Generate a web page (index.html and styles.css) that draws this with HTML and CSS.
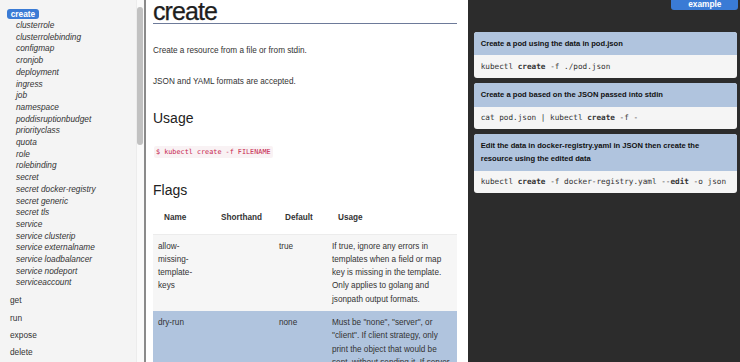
FILE: index.html
```html
<!DOCTYPE html>
<html>
<head>
<meta charset="utf-8">
<title>kubectl create</title>
<link rel="stylesheet" href="styles.css">
</head>
<body>
<div class="page">
  <nav class="sidebar">
    <ul class="nav">
      <li class="group">
        <div class="badge-row"><span class="badge">create</span></div>
        <ul class="sub">
          <li>clusterrole</li>
          <li>clusterrolebinding</li>
          <li>configmap</li>
          <li>cronjob</li>
          <li>deployment</li>
          <li>ingress</li>
          <li>job</li>
          <li>namespace</li>
          <li>poddisruptionbudget</li>
          <li>priorityclass</li>
          <li>quota</li>
          <li>role</li>
          <li>rolebinding</li>
          <li>secret</li>
          <li>secret docker-registry</li>
          <li>secret generic</li>
          <li>secret tls</li>
          <li>service</li>
          <li>service clusterip</li>
          <li>service externalname</li>
          <li>service loadbalancer</li>
          <li>service nodeport</li>
          <li>serviceaccount</li>
        </ul>
      </li>
      <li class="top">get</li>
      <li class="top">run</li>
      <li class="top">expose</li>
      <li class="top">delete</li>
    </ul>
    <div class="scrollbar"><div class="thumb"></div></div>
  </nav>

  <main class="content">
    <h1>create</h1>
    <p class="lead">Create a resource from a file or from stdin.</p>
    <p class="lead second">JSON and YAML formats are accepted.</p>
    <h2 class="usage-title">Usage</h2>
    <div class="usage"><code>$ kubectl create -f FILENAME</code></div>
    <h2 class="flags-title">Flags</h2>
    <table class="flags">
      <colgroup>
        <col class="c-name">
        <col class="c-short">
        <col class="c-def">
        <col class="c-usage">
      </colgroup>
      <thead>
        <tr><th>Name</th><th>Shorthand</th><th>Default</th><th>Usage</th></tr>
      </thead>
      <tbody>
        <tr class="odd">
          <td>allow-missing-template-keys</td>
          <td></td>
          <td>true</td>
          <td>If true, ignore any errors in templates when a field or map key is missing in the template. Only applies to golang and jsonpath output formats.</td>
        </tr>
        <tr class="hl">
          <td>dry-run</td>
          <td></td>
          <td>none</td>
          <td>Must be "none", "server", or "client". If client strategy, only print the object that would be sent, without sending it. If server strategy, submit server-side request without persisting the resource.</td>
        </tr>
      </tbody>
    </table>
  </main>

  <aside class="examples">
    <div class="tabbar"><span class="tab">example</span></div>
    <div class="cards">
      <div class="card">
        <div class="card-head">Create a pod using the data in pod.json</div>
        <pre class="card-code">kubectl <b>create</b> -f ./pod.json</pre>
      </div>
      <div class="card">
        <div class="card-head">Create a pod based on the JSON passed into stdin</div>
        <pre class="card-code">cat pod.json | kubectl <b>create</b> -f -</pre>
      </div>
      <div class="card">
        <div class="card-head">Edit the data in docker-registry.yaml in JSON then create the resource using the edited data</div>
        <pre class="card-code">kubectl <b>create</b> -f docker-registry.yaml --<b>edit</b> -o json</pre>
      </div>
    </div>
  </aside>
</div>
</body>
</html>
```

FILE: styles.css
```css
html, body {
  margin: 0;
  padding: 0;
  height: 100%;
  overflow: hidden;
}

body {
  font-family: "Liberation Sans", Arial, sans-serif;
  color: #333;
  background: #fff;
}

.page {
  display: flex;
  height: 362px;
  overflow: hidden;
}

/* ---------- sidebar ---------- */
.sidebar {
  position: relative;
  width: 144px;
  flex: none;
  background: #f4f4f4;
  border-right: 2px solid #8a8a8a;
  overflow: hidden;
}

.nav {
  list-style: none;
  margin: 0;
  padding: 8px 0 0;
  font-size: 8.3px;
  color: #333;
}

.badge-row {
  display: flex;
  align-items: center;
  height: 12px;
}

.badge {
  margin-left: 7px;
  padding: 0 3.7px;
  line-height: 10px;
  background: #3a7bd5;
  color: #fff;
  font-weight: bold;
  border-radius: 3px;
}

.sub {
  list-style: none;
  margin: 0 0 3px;
  padding: 0 0 0 16px;
  font-style: italic;
}

.sub li {
  line-height: 11.7px;
  white-space: nowrap;
}

.top {
  line-height: 17.4px;
  padding-left: 10px;
}

.scrollbar {
  position: absolute;
  top: 0;
  right: 0;
  width: 7px;
  height: 100%;
  background: #fafafa;
  border-left: 1px solid #ececec;
}

.thumb {
  position: absolute;
  top: 7px;
  left: 0;
  width: 6px;
  height: 138px;
  border-radius: 3px;
  background: #c1c1c1;
}

/* ---------- main content ---------- */
.content {
  width: 322px;
  flex: none;
  box-sizing: border-box;
  padding: 0 11px 0 7px;
  background: #fff;
  overflow: hidden;
}

h1 {
  margin: 0;
  font-size: 25px;
  font-weight: normal;
  line-height: 22px;
  letter-spacing: -0.9px;
  color: #1e1e1e;
  padding-bottom: 1px;
  border-bottom: 1.5px solid #6d7a99;
  -webkit-text-stroke: 0.25px #1e1e1e;
}

.lead {
  margin: 20px 0 0;
  font-size: 8.2px;
  line-height: 13.3px;
}

.lead.second {
  margin-top: 17.4px;
}

h2 {
  margin: 0;
  font-size: 14px;
  font-weight: normal;
  line-height: 17px;
  color: #222;
}

.usage-title {
  margin-top: 22px;
}

.usage {
  margin-top: 13px;
}

.usage code {
  display: inline-block;
  margin-left: 1px;
  padding: 2px 2px;
  font-family: "DejaVu Sans Mono", "Liberation Mono", monospace;
  font-size: 6.8px;
  line-height: 8px;
  color: #c7254e;
  background: #f9f2f4;
  border-radius: 2px;
}

.flags-title {
  margin-top: 24.5px;
}

.flags {
  margin-top: 3px;
  width: 304px;
  table-layout: fixed;
  border-collapse: collapse;
  font-size: 8.2px;
  line-height: 13.2px;
}

.c-name { width: 57px; }
.c-short { width: 64px; }
.c-def { width: 53px; }
.c-usage { width: 130px; }

.flags th {
  text-align: left;
  font-weight: bold;
  padding: 9px 5px 9px 11px;
  border-bottom: 1px solid #ececec;
}

.flags td {
  vertical-align: top;
  padding: 5.2px 5px;
}

.flags tr.odd td {
  background: #f6f6f6;
}

.flags tr.hl td {
  background: #b0c4de;
}

/* ---------- examples panel ---------- */
.examples {
  flex: 1;
  min-width: 0;
  background: #2c2c2c;
  padding: 0 2.7px 0 6px;
}

.tabbar {
  display: flex;
  justify-content: flex-end;
  height: 10px;
}

.tab {
  width: 67px;
  height: 10px;
  margin-right: -1px;
  text-align: center;
  font-size: 8.3px;
  line-height: 9px;
  font-weight: bold;
  color: #fff;
  background: #3a7bd5;
  border-radius: 0 0 3px 3px;
}

.cards {
  margin-top: 21.7px;
  display: flex;
  flex-direction: column;
  gap: 5px;
}

.card {
  border-radius: 3px;
  overflow: hidden;
  background: #f5f5f5;
}

.card-head {
  background: #b0c4de;
  padding: 5.4px 6.7px;
  font-weight: bold;
  font-size: 7.6px;
  line-height: 13px;
  color: #111;
}

.card-code {
  margin: 0;
  padding: 5.7px 6.7px;
  font-family: "DejaVu Sans Mono", "Liberation Mono", monospace;
  font-size: 7.7px;
  line-height: 11px;
  color: #333;
  white-space: pre;
}
```
